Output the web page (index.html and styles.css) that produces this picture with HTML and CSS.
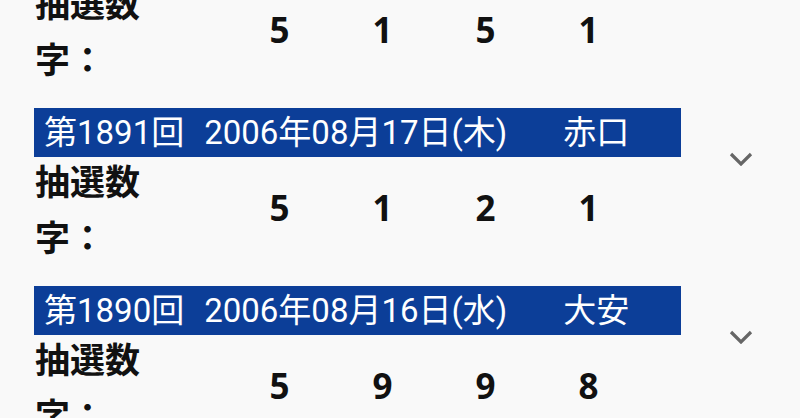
FILE: index.html
```html
<!DOCTYPE html>
<html lang="ja">
<head>
<meta charset="utf-8">
<title>抽選結果</title>
<link rel="stylesheet" href="styles.css">
</head>
<body>
<div class="list">
  <section class="card">
    <div class="main">
      <div class="bar"><span class="no">第1892回</span><span class="date">2006年08月18日(金)</span><span class="rokuyo">先勝</span></div>
      <div class="body">
        <div class="label">抽選数字：</div>
        <div class="num">5</div><div class="num">1</div><div class="num">5</div><div class="num">1</div>
      </div>
    </div>
    <div class="aside"><svg class="chev" viewBox="0 0 24 14" width="24" height="14"><polyline points="2,2 12,12 22,2"/></svg></div>
  </section>
  <section class="card">
    <div class="main">
      <div class="bar"><span class="no">第1891回</span><span class="date">2006年08月17日(木)</span><span class="rokuyo">赤口</span></div>
      <div class="body">
        <div class="label">抽選数字：</div>
        <div class="num">5</div><div class="num">1</div><div class="num">2</div><div class="num">1</div>
      </div>
    </div>
    <div class="aside"><svg class="chev" viewBox="0 0 24 14" width="24" height="14"><polyline points="2,2 12,12 22,2"/></svg></div>
  </section>
  <section class="card">
    <div class="main">
      <div class="bar"><span class="no">第1890回</span><span class="date">2006年08月16日(水)</span><span class="rokuyo">大安</span></div>
      <div class="body">
        <div class="label">抽選数字：</div>
        <div class="num">5</div><div class="num">9</div><div class="num">9</div><div class="num">8</div>
      </div>
    </div>
    <div class="aside"><svg class="chev" viewBox="0 0 24 14" width="24" height="14"><polyline points="2,2 12,12 22,2"/></svg></div>
  </section>
</div>
</body>
</html>
```

FILE: styles.css
```css
html, body {
  margin: 0;
  padding: 0;
  background: #f9f9f9;
  font-family: "Noto Sans CJK JP", "Noto Sans", sans-serif;
  overflow: hidden;
}
.list {
  margin-top: -70px;
}
.card {
  display: flex;
  margin-bottom: 22px;
}
.main {
  width: 647px;
  margin-left: 34px;
}
.bar {
  height: 49px;
  line-height: 49px;
  background: #0c3e98;
  color: #ffffff;
  font-family: "Roboto", "Noto Sans CJK JP", sans-serif;
  font-size: 33px;
  padding-left: 10px;
  white-space: nowrap;
  display: flex;
}
.date {
  margin-left: 20px;
}
.rokuyo {
  margin-left: 56px;
}
.body {
  display: grid;
  grid-template-columns: 194px repeat(4, 103px);
  align-items: center;
  margin-top: -5px;
  font-family: "Noto Sans", "Noto Sans CJK JP", sans-serif;
  font-size: 35px;
  font-weight: 700;
  line-height: 56px;
  color: #111111;
}
.label {
  width: 105px;
  margin-left: 1px;
  font-family: "Noto Sans CJK JP", sans-serif;
}
.num {
  text-align: center;
}
.aside {
  flex: 1;
  display: flex;
  justify-content: center;
  align-items: flex-start;
}
.chev {
  display: block;
  margin-top: 44px;
  fill: none;
  stroke: #666666;
  stroke-width: 3.2;
}
```
